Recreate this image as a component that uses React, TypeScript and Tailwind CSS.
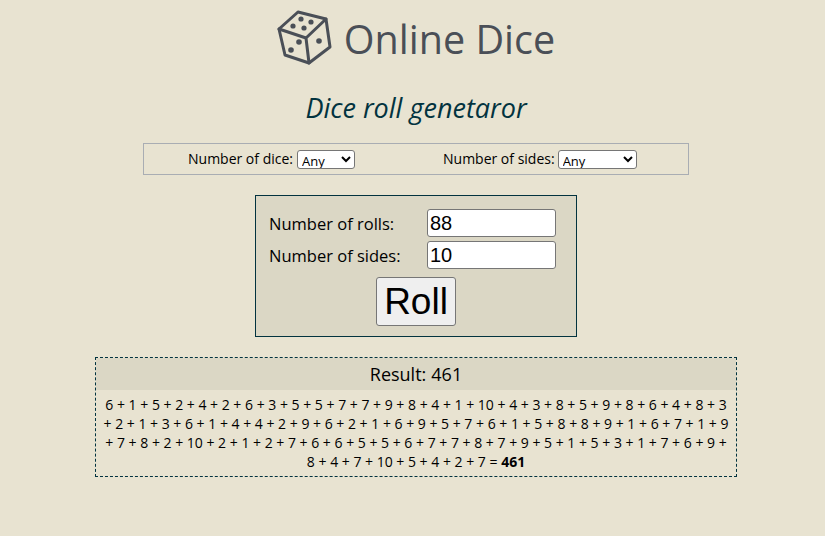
const font = "font-['Open_Sans','Noto_Sans',sans-serif]";

function DiceIcon() {
  return (
    <svg width="56" height="58" viewBox="7 4 56 58" fill="none" stroke="#4a4f57" strokeWidth="3" strokeLinejoin="round" strokeLinecap="round">
      <path d="M28 7 L56 14 L60 42 L39 58 L15 50 L9 24 Z" />
      <path d="M9 24 L36 33 L56 14 M36 33 L39 58" />
      <g fill="#4a4f57" stroke="none">
        <circle cx="31" cy="14" r="2.6" />
        <circle cx="41" cy="17" r="2.6" />
        <circle cx="23" cy="21" r="2.6" />
        <circle cx="34" cy="23" r="2.6" />
        <circle cx="29" cy="37" r="2.8" />
        <circle cx="21" cy="45" r="2.8" />
        <circle cx="49" cy="36" r="2.8" />
      </g>
    </svg>
  );
}

export default function App() {
  return (
    <div className={`${font} flex min-h-[536px] w-full flex-col items-center bg-[#e8e3d1] pl-[7px] text-black`}>
      <div className="mt-[9px] flex h-[58px] items-center gap-[11px]">
        <DiceIcon />
        <h1 className="pt-[3px] text-[39.5px] leading-none text-[#4a4f57]">Online Dice</h1>
      </div>

      <h2 className="mt-[24px] text-[27px] leading-[34px] italic text-[#02333f]">Dice roll genetaror</h2>

      <div className="mt-[18px] flex h-[32px] w-[546px] items-center border border-[#a9adb3] text-[14px]">
        <div className="ml-[44px] flex w-[255px] items-center gap-[4px]">
          <span className="mb-[1px]">Number of dice:</span>
          <select className="h-[19px] w-[58px] rounded-[3px] border border-[#767676] bg-white py-0 text-[13px] leading-[17px]">
            <option>Any</option>
          </select>
        </div>
        <div className="flex items-center gap-[3px]">
          <span className="mb-[1px]">Number of sides:</span>
          <select className="h-[19px] w-[79px] rounded-[3px] border border-[#767676] bg-white py-0 text-[13px] leading-[17px]">
            <option>Any</option>
          </select>
        </div>
      </div>

      <div className="mt-[20px] flex h-[142px] w-[322px] flex-col border border-[#02333f] bg-[#dbd7c5] pl-[13px] pt-[13px]">
        <div className="flex h-[28px] items-center text-[16.5px]">
          <label className="w-[158px] pt-[2px]">Number of rolls:</label>
          <input readOnly value="88" className="h-[28px] w-[129px] rounded-[3px] border border-[#767676] bg-white px-[2px] font-['Liberation_Sans',sans-serif] text-[20px]" />
        </div>
        <div className="mt-[4px] flex h-[28px] items-center text-[16.5px]">
          <label className="w-[158px] pt-[2px]">Number of sides:</label>
          <input readOnly value="10" className="h-[28px] w-[129px] rounded-[3px] border border-[#767676] bg-white px-[2px] font-['Liberation_Sans',sans-serif] text-[20px]" />
        </div>
        <button className="mt-[8px] ml-[107px] h-[49px] w-[80px] rounded-[3px] border border-[#767676] bg-[#efefef] font-['Liberation_Sans',sans-serif] text-[37px] leading-none">
          Roll
        </button>
      </div>

      <div className="mt-[20px] h-[120px] w-[642px] border border-dashed border-[#02333f]">
        <div className="flex h-[32px] items-center justify-center gap-[5px] bg-[#dbd7c5] text-[18px]">
          <span>Result:</span>
          <span>461</span>
        </div>
        <p className="mt-[5px] text-center text-[14px] leading-[19px]">
          6 + 1 + 5 + 2 + 4 + 2 + 6 + 3 + 5 + 5 + 7 + 7 + 9 + 8 + 4 + 1 + 10 + 4 + 3 + 8 + 5 + 9 + 8 + 6 + 4 + 8 + 3<br />
          + 2 + 1 + 3 + 6 + 1 + 4 + 4 + 2 + 9 + 6 + 2 + 1 + 6 + 9 + 5 + 7 + 6 + 1 + 5 + 8 + 8 + 9 + 1 + 6 + 7 + 1 + 9<br />
          + 7 + 8 + 2 + 10 + 2 + 1 + 2 + 7 + 6 + 6 + 5 + 5 + 6 + 7 + 7 + 8 + 7 + 9 + 5 + 1 + 5 + 3 + 1 + 7 + 6 + 9 +<br />
          8 + 4 + 7 + 10 + 5 + 4 + 2 + 7 = <strong>461</strong>
        </p>
      </div>
    </div>
  );
}
